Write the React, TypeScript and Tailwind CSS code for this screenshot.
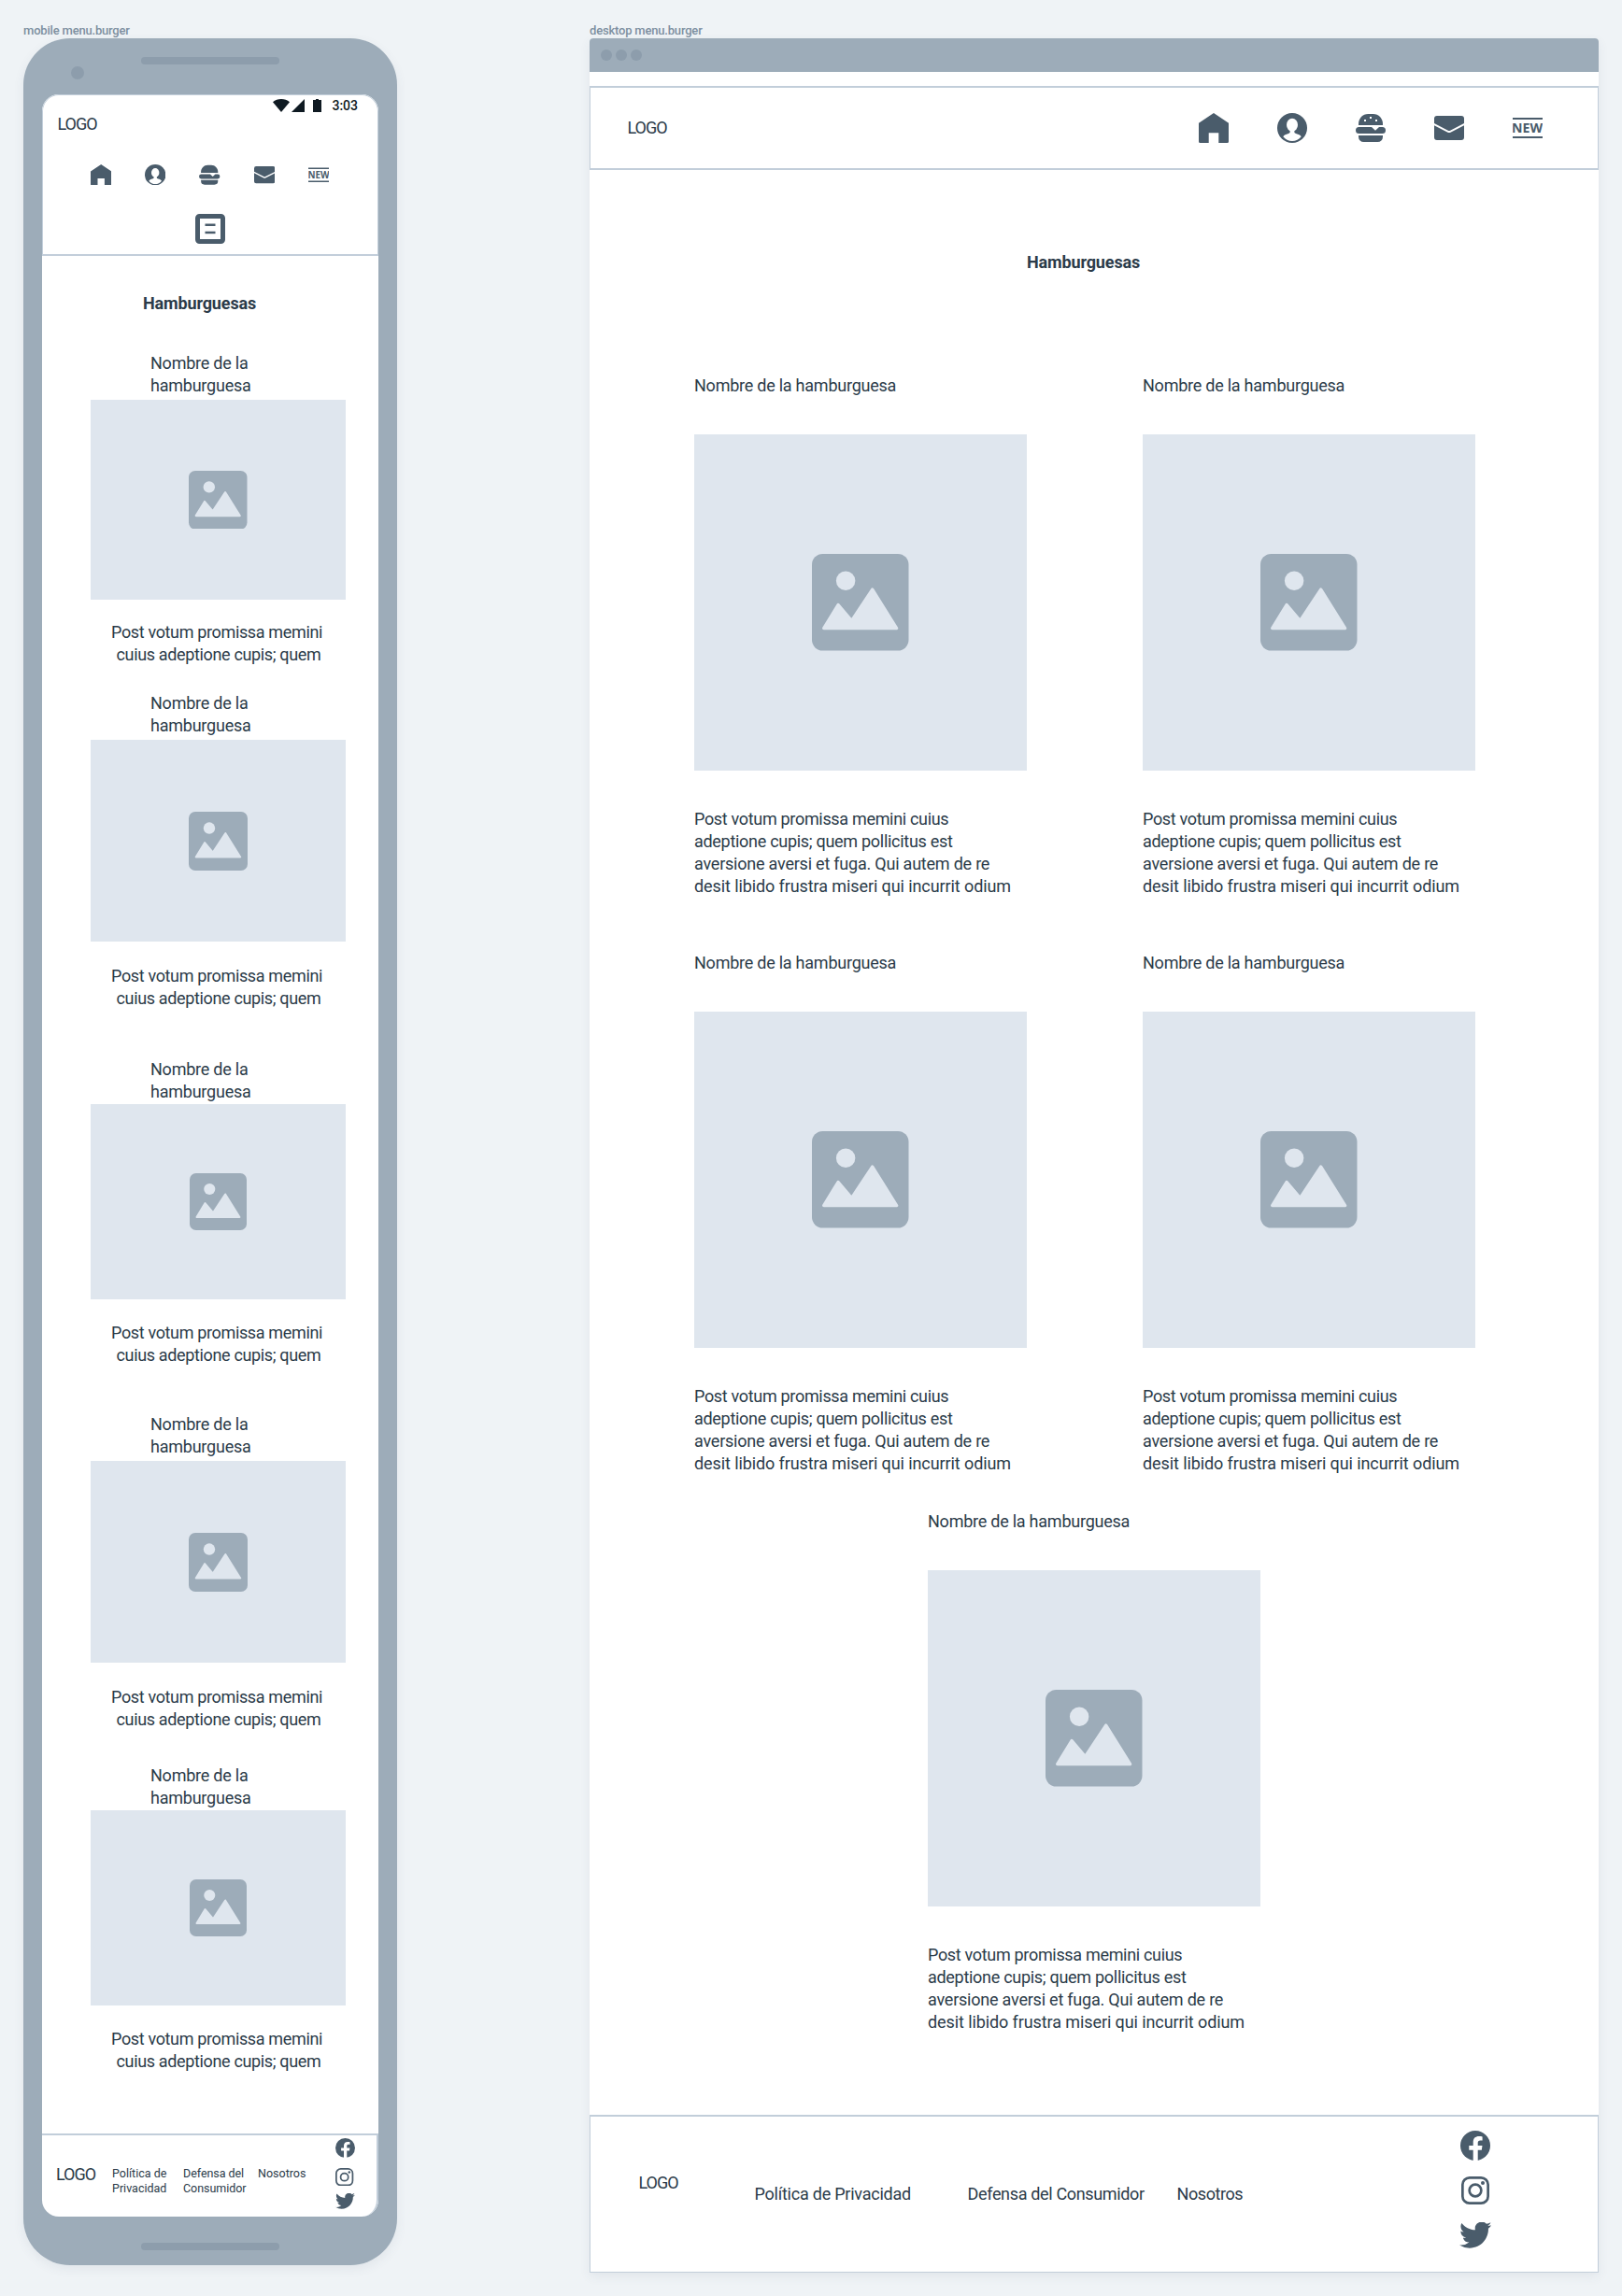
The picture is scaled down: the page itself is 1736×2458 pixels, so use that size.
import type { ReactNode } from 'react';

type IconProps = { className?: string };

/* ---------- Icons (32 x 32 artboard) ---------- */

const HomeIcon = ({ className }: IconProps) => (
  <svg viewBox="0 0 32 32" className={className} fill="currentColor">
    <path d="M16 0 32 10.7v19.8a1.5 1.5 0 0 1-1.5 1.5h-9.2V21.3H10.7V32H1.5A1.5 1.5 0 0 1 0 30.500V10.700Z" />
  </svg>
);

const UserIcon = ({ className }: IconProps) => (
  <svg viewBox="0 0 32 32" className={className}>
    <circle cx="16" cy="16" r="16" fill="currentColor" />
    <ellipse cx="16" cy="12.700" rx="6" ry="7" fill="#fff" />
    <path
      d="M13.700 17v3.300c0 .9-.9 1.500-2.300 2-2 .7-3.900 1.300-5.100 2.900C8.700 28.300 12.100 30 16 30s7.300-1.700 9.700-4.800c-1.200-1.600-3.100-2.200-5.100-2.900-1.400-.5-2.300-1.100-2.300-2V17Z"
      fill="#fff"
    />
  </svg>
);

const BurgerIcon = ({ className, seeds }: IconProps & { seeds?: boolean }) => (
  <svg viewBox="0 0 32 32" className={className} fill="currentColor">
    <path d="M3 13v-1.500C3 5.700 7.500 1 13.300 1h5.400C24.500 1 29 5.700 29 11.500V13Z" />
    <path d="M3.500 15H17l4 3.700L25 15h3.500a3.500 3.500 0 0 1 0 7h-25a3.500 3.500 0 0 1 0-7Z" />
    <path d="M3 24h26v1.500a5.500 5.500 0 0 1-5.500 5.500h-15A5.500 5.500 0 0 1 3 25.500Z" />
    {seeds && <path fill="#fff" d="M9 7h2v2H9zM15 4h2v2h-2zM21 7h2v2h-2z" />}
  </svg>
);

const MailIcon = ({ className }: IconProps) => (
  <svg viewBox="0 0 32 32" className={className} fill="currentColor">
    <path d="M3 3h26a3 3 0 0 1 3 3v5L17.200 18.700a2.600 2.600 0 0 1-2.400 0L0 11V6a3 3 0 0 1 3-3Z" />
    <path d="M0 13.200 14.500 20.700a3.300 3.300 0 0 0 3 0L32 13.200V26a3 3 0 0 1-3 3H3a3 3 0 0 1-3-3Z" />
  </svg>
);

const NewIcon = ({ className }: IconProps) => (
  <svg viewBox="0 0 32 32" className={className} fill="currentColor">
    <path d="M0 5h32v2H0zM0 25h32v2H0z" />
    <text
      x="-0.900"
      y="21"
      textLength="33"
      lengthAdjust="spacingAndGlyphs"
      className="font-['Open_Sans',sans-serif] text-[14px] font-bold"
    >
      NEW
    </text>
  </svg>
);

const MenuIcon = ({ className }: IconProps) => (
  <svg viewBox="0 0 32 32" className={className}>
    <rect x="2.500" y="2.500" width="27" height="27" rx="2" fill="#fff" stroke="currentColor" strokeWidth="5" />
    <rect x="10.500" y="10.500" width="11" height="2.500" fill="currentColor" />
    <rect x="10.500" y="18.700" width="11" height="2.500" fill="currentColor" />
  </svg>
);

const FacebookIcon = ({ className }: IconProps) => (
  <svg viewBox="0 0 32 32" className={className}>
    <circle cx="16" cy="16" r="16" fill="currentColor" />
    <path
      d="M13.700 32V20.700H9.300V16h4.400v-3.300c0-4.500 2.300-6.600 6.300-6.600 1.500 0 2.800.2 3.600.3v4h-2.200c-2 0-2.700.9-2.700 2.800V16h4.800l-.7 4.700h-4.100V32Z"
      fill="#fff"
    />
  </svg>
);

const InstagramIcon = ({ className }: IconProps) => (
  <svg viewBox="0 0 30 30" className={className} fill="none" stroke="currentColor">
    <rect x="1.350" y="1.350" width="27.300" height="27.300" rx="7.500" strokeWidth="2.700" />
    <circle cx="15" cy="15" r="6.350" strokeWidth="2.700" />
    <circle cx="23" cy="7" r="2" fill="currentColor" stroke="none" />
  </svg>
);

const TwitterIcon = ({ className }: IconProps) => (
  <svg viewBox="0 2.500 24 19.500" className={className} fill="currentColor">
    <path d="M23.950 4.570a10 10 0 0 1-2.820.77 4.960 4.960 0 0 0 2.160-2.720c-.95.55-2 .96-3.130 1.180a4.920 4.920 0 0 0-8.380 4.480C7.690 8.100 4.070 6.130 1.640 3.160a4.820 4.820 0 0 0-.67 2.480c0 1.710.87 3.210 2.190 4.100a4.900 4.900 0 0 1-2.230-.62v.06a4.920 4.920 0 0 0 3.950 4.830 5 5 0 0 1-2.210.08 4.940 4.940 0 0 0 4.600 3.420A9.870 9.870 0 0 1 0 19.540a13.990 13.990 0 0 0 7.550 2.210c9.050 0 14-7.500 14-13.990 0-.21 0-.42-.02-.63a9.940 9.940 0 0 0 2.420-2.560Z" />
  </svg>
);

const PictureIcon = ({ className }: IconProps) => (
  <svg viewBox="0 0 104 104" className={className}>
    <rect width="104" height="104" rx="11.500" className="fill-[#9dacb9]" />
    <circle cx="36.300" cy="29" r="10.300" className="fill-[#dfe6ee]" />
    <path
      d="M12.800 80 28.200 54.800 42.700 72 65 38.300 91 80Z"
      className="fill-[#dfe6ee] stroke-[#dfe6ee]"
      strokeWidth="3.500"
      strokeLinejoin="round"
    />
  </svg>
);

const WifiIcon = () => (
  <svg viewBox="0 0 18 14" className="h-[14px] w-[18px]" fill="#0f1a22">
    <path d="M0 3.200C2.500 1 5.600 0 9 0s6.500 1 9 3.200L9 14Z" />
  </svg>
);

const SignalIcon = () => (
  <svg viewBox="0 0 14 14" className="ml-[2px] h-[14px] w-[14px]" fill="#0f1a22">
    <path d="M14 0v14H0Z" />
  </svg>
);

const BatteryIcon = () => (
  <svg viewBox="0 0 9 14" className="ml-[9px] h-[14px] w-[9px]" fill="#0f1a22">
    <path d="M3 0h3v1h3v13H0V1h3Z" />
  </svg>
);

/* ---------- Shared ---------- */

const Placeholder = ({ size, icon }: { size: string; icon: string }) => (
  <div className={`flex items-center justify-center bg-[#dfe6ee] ${size}`}>
    <PictureIcon className={icon} />
  </div>
);

const Logo = ({ className }: IconProps) => <span className={`tracking-[-1px] ${className ?? ''}`}>LOGO</span>;

const FrameLabel = ({ children }: { children: ReactNode }) => (
  <div className="h-[17px] text-[13px] leading-[17px] font-medium tracking-[-0.190px] whitespace-nowrap text-[#7d8fa0]">
    {children}
  </div>
);

/* ---------- Mobile ---------- */

const mobileCards = [
  { gap: 'mt-[40px]', title: 'h-[51px]', size: 'h-[214px] w-[273px]', icon: 'size-[62.500px]', text: 'mt-[23px]' },
  { gap: 'mt-[28px]', title: 'h-[51px]', size: 'h-[216px] w-[273px]', icon: 'size-[63px]', text: 'mt-[25px]' },
  { gap: 'mt-[52px]', title: 'h-[49px]', size: 'h-[209px] w-[273px]', icon: 'size-[61px]', text: 'mt-[24px]' },
  { gap: 'mt-[50px]', title: 'h-[51px]', size: 'h-[216px] w-[273px]', icon: 'size-[63px]', text: 'mt-[25px]' },
  { gap: 'mt-[36px]', title: 'h-[49px]', size: 'h-[209px] w-[273px]', icon: 'size-[61px]', text: 'mt-[24px]' },
];

const MobileCard = ({ gap, title, size, icon, text }: (typeof mobileCards)[number]) => (
  <article className={gap}>
    <h3 className={`ml-[64px] tracking-[-0.230px] ${title}`}>
      Nombre de la
      <br />
      hamburguesa
    </h3>
    <Placeholder size={size} icon={icon} />
    <p className={`ml-[22px] whitespace-nowrap tracking-[-0.350px] ${text}`}>
      Post votum promissa memini
      <br />
      <span className="ml-[5.500px]">cuius adeptione cupis; quem</span>
    </p>
  </article>
);

const MobileFrame = () => (
  <section className="w-[400px]">
    <FrameLabel>mobile menu.burger</FrameLabel>
    <div className="relative h-[2384px] rounded-[50px] bg-[#9dacb9] px-[20px] pt-[60px] shadow-[0_4px_12px_rgba(60,80,100,0.080)]">
      <div className="absolute top-[20px] left-[126px] h-[8px] w-[148px] rounded-full bg-[#8d9dac]" />
      <div className="absolute top-[30px] left-[51px] size-[14px] rounded-full bg-[#8d9dac]" />
      <div className="absolute bottom-[16px] left-[126px] h-[8px] w-[148px] rounded-full bg-[#8d9dac]" />

      <div className="flex h-[2272px] flex-col overflow-hidden rounded-[18px] bg-white">
        <header className="h-[173px] rounded-t-[18px] border border-b-2 border-[#c2ceda]">
          <div className="mt-[4px] flex h-[14px] items-center justify-end pr-[21px]">
            <WifiIcon />
            <SignalIcon />
            <BatteryIcon />
            <span className="ml-[11.500px] text-[14px] leading-[14px] font-medium text-[#0f1a22]">3:03</span>
          </div>
          <Logo className="mt-px ml-[15.500px] block" />
          <div className="mt-[31px] ml-[50.500px] flex gap-[36px] text-[#4a5c6b]">
            <HomeIcon className="size-[22.400px]" />
            <UserIcon className="size-[22.400px]" />
            <BurgerIcon className="size-[22.400px]" />
            <MailIcon className="size-[22.400px]" />
            <NewIcon className="size-[22.400px]" />
          </div>
          <MenuIcon className="mt-[30.600px] ml-[163px] size-[32px] text-[#4a5c6b]" />
        </header>

        <main className="flex-1 pl-[52px]">
          <h2 className="mt-[39px] ml-[56px] font-bold tracking-[-0.140px]">Hamburguesas</h2>
          {mobileCards.map((card, i) => (
            <MobileCard key={i} {...card} />
          ))}
        </main>

        <footer className="flex h-[89px] rounded-br-[18px] border-t-2 border-r-2 border-[#c2ceda]">
          <Logo className="mt-[30px] ml-[15px] w-[60px]" />
          <div className="mt-[33px] flex text-[12.500px] leading-[16px]">
            <p className="w-[76px]">
              Política de
              <br />
              Privacidad
            </p>
            <p className="w-[80px] tracking-[-0.050px]">
              Defensa del
              <br />
              Consumidor
            </p>
            <p className="w-[82.500px]">Nosotros</p>
          </div>
          <div className="flex flex-col items-center text-[#4a5c6b]">
            <FacebookIcon className="mt-[3px] size-[21px]" />
            <InstagramIcon className="mt-[11px] size-[19.300px]" />
            <TwitterIcon className="mt-[8px] h-[17px] w-[21px]" />
          </div>
        </footer>
      </div>
    </div>
  </section>
);

/* ---------- Desktop ---------- */

const DesktopCard = () => (
  <article className="w-[356px] whitespace-nowrap">
    <h3 className="tracking-[-0.240px]">Nombre de la hamburguesa</h3>
    <Placeholder size="my-[40px] h-[360px] w-[356px]" icon="size-[103.500px]" />
    <p>
      <span className="block tracking-[-0.320px]">Post votum promissa memini cuius</span>
      <span className="block tracking-[-0.290px]">adeptione cupis; quem pollicitus est</span>
      <span className="block tracking-[-0.220px]">aversione aversi et fuga. Qui autem de re</span>
      <span className="block tracking-[-0.094px]">desit libido frustra miseri qui incurrit odium</span>
    </p>
  </article>
);

const DesktopFrame = () => (
  <section className="w-[1080px]">
    <FrameLabel>desktop menu.burger</FrameLabel>
    <div className="flex h-[2392px] flex-col rounded-t-[4px] bg-white shadow-[0_4px_12px_rgba(60,80,100,0.080)]">
      <div className="flex h-[36px] items-center gap-[4px] rounded-t-[4px] bg-[#9dacb9] pl-[12px]">
        <span className="size-[12px] rounded-full bg-[#8d9dac]" />
        <span className="size-[12px] rounded-full bg-[#8d9dac]" />
        <span className="size-[12px] rounded-full bg-[#8d9dac]" />
      </div>

      <header className="mt-[15px] flex h-[90px] items-center justify-between border border-y-2 border-[#c2ceda] pr-[59px] pl-[39.500px]">
        <Logo />
        <nav className="flex gap-[52px] text-[#4a5c6b]">
          <HomeIcon className="size-[32px]" />
          <UserIcon className="size-[32px]" />
          <BurgerIcon className="size-[32px]" seeds />
          <MailIcon className="size-[32px]" />
          <NewIcon className="size-[32px]" />
        </nav>
      </header>

      <main className="flex-1">
        <h2 className="mt-[87px] ml-[468px] font-bold tracking-[-0.140px]">Hamburguesas</h2>
        <div className="mt-[108px] ml-[112px] grid w-[836px] grid-cols-2 gap-x-[124px] gap-y-[58px]">
          <DesktopCard />
          <DesktopCard />
          <DesktopCard />
          <DesktopCard />
        </div>
        <div className="mt-[38px] ml-[362px]">
          <DesktopCard />
        </div>
      </main>

      <footer className="flex h-[169px] border border-t-2 border-[#c2ceda]">
        <Logo className="mt-[59px] ml-[51.500px] w-[124px]" />
        <div className="mt-[71px] flex whitespace-nowrap">
          <span className="w-[228px] tracking-[-0.230px]">Política de Privacidad</span>
          <span className="w-[224px] tracking-[-0.340px]">Defensa del Consumidor</span>
          <span className="w-[302px] tracking-[-0.420px]">Nosotros</span>
        </div>
        <div className="flex w-[35px] flex-col items-center text-[#4a5c6b]">
          <FacebookIcon className="mt-[15px] size-[32px]" />
          <InstagramIcon className="mt-[17px] size-[30px]" />
          <TwitterIcon className="mt-[19px] h-[28px] w-[34.500px]" />
        </div>
      </footer>
    </div>
  </section>
);

export default function App() {
  return (
    <div className="flex h-[2458px] w-[1736px] gap-[206px] overflow-hidden bg-[#eff3f6] pt-[24px] pl-[25px] font-['Roboto','Open_Sans',sans-serif] text-[18px] leading-[24px] text-[#2b3b49]">
      <MobileFrame />
      <DesktopFrame />
    </div>
  );
}
